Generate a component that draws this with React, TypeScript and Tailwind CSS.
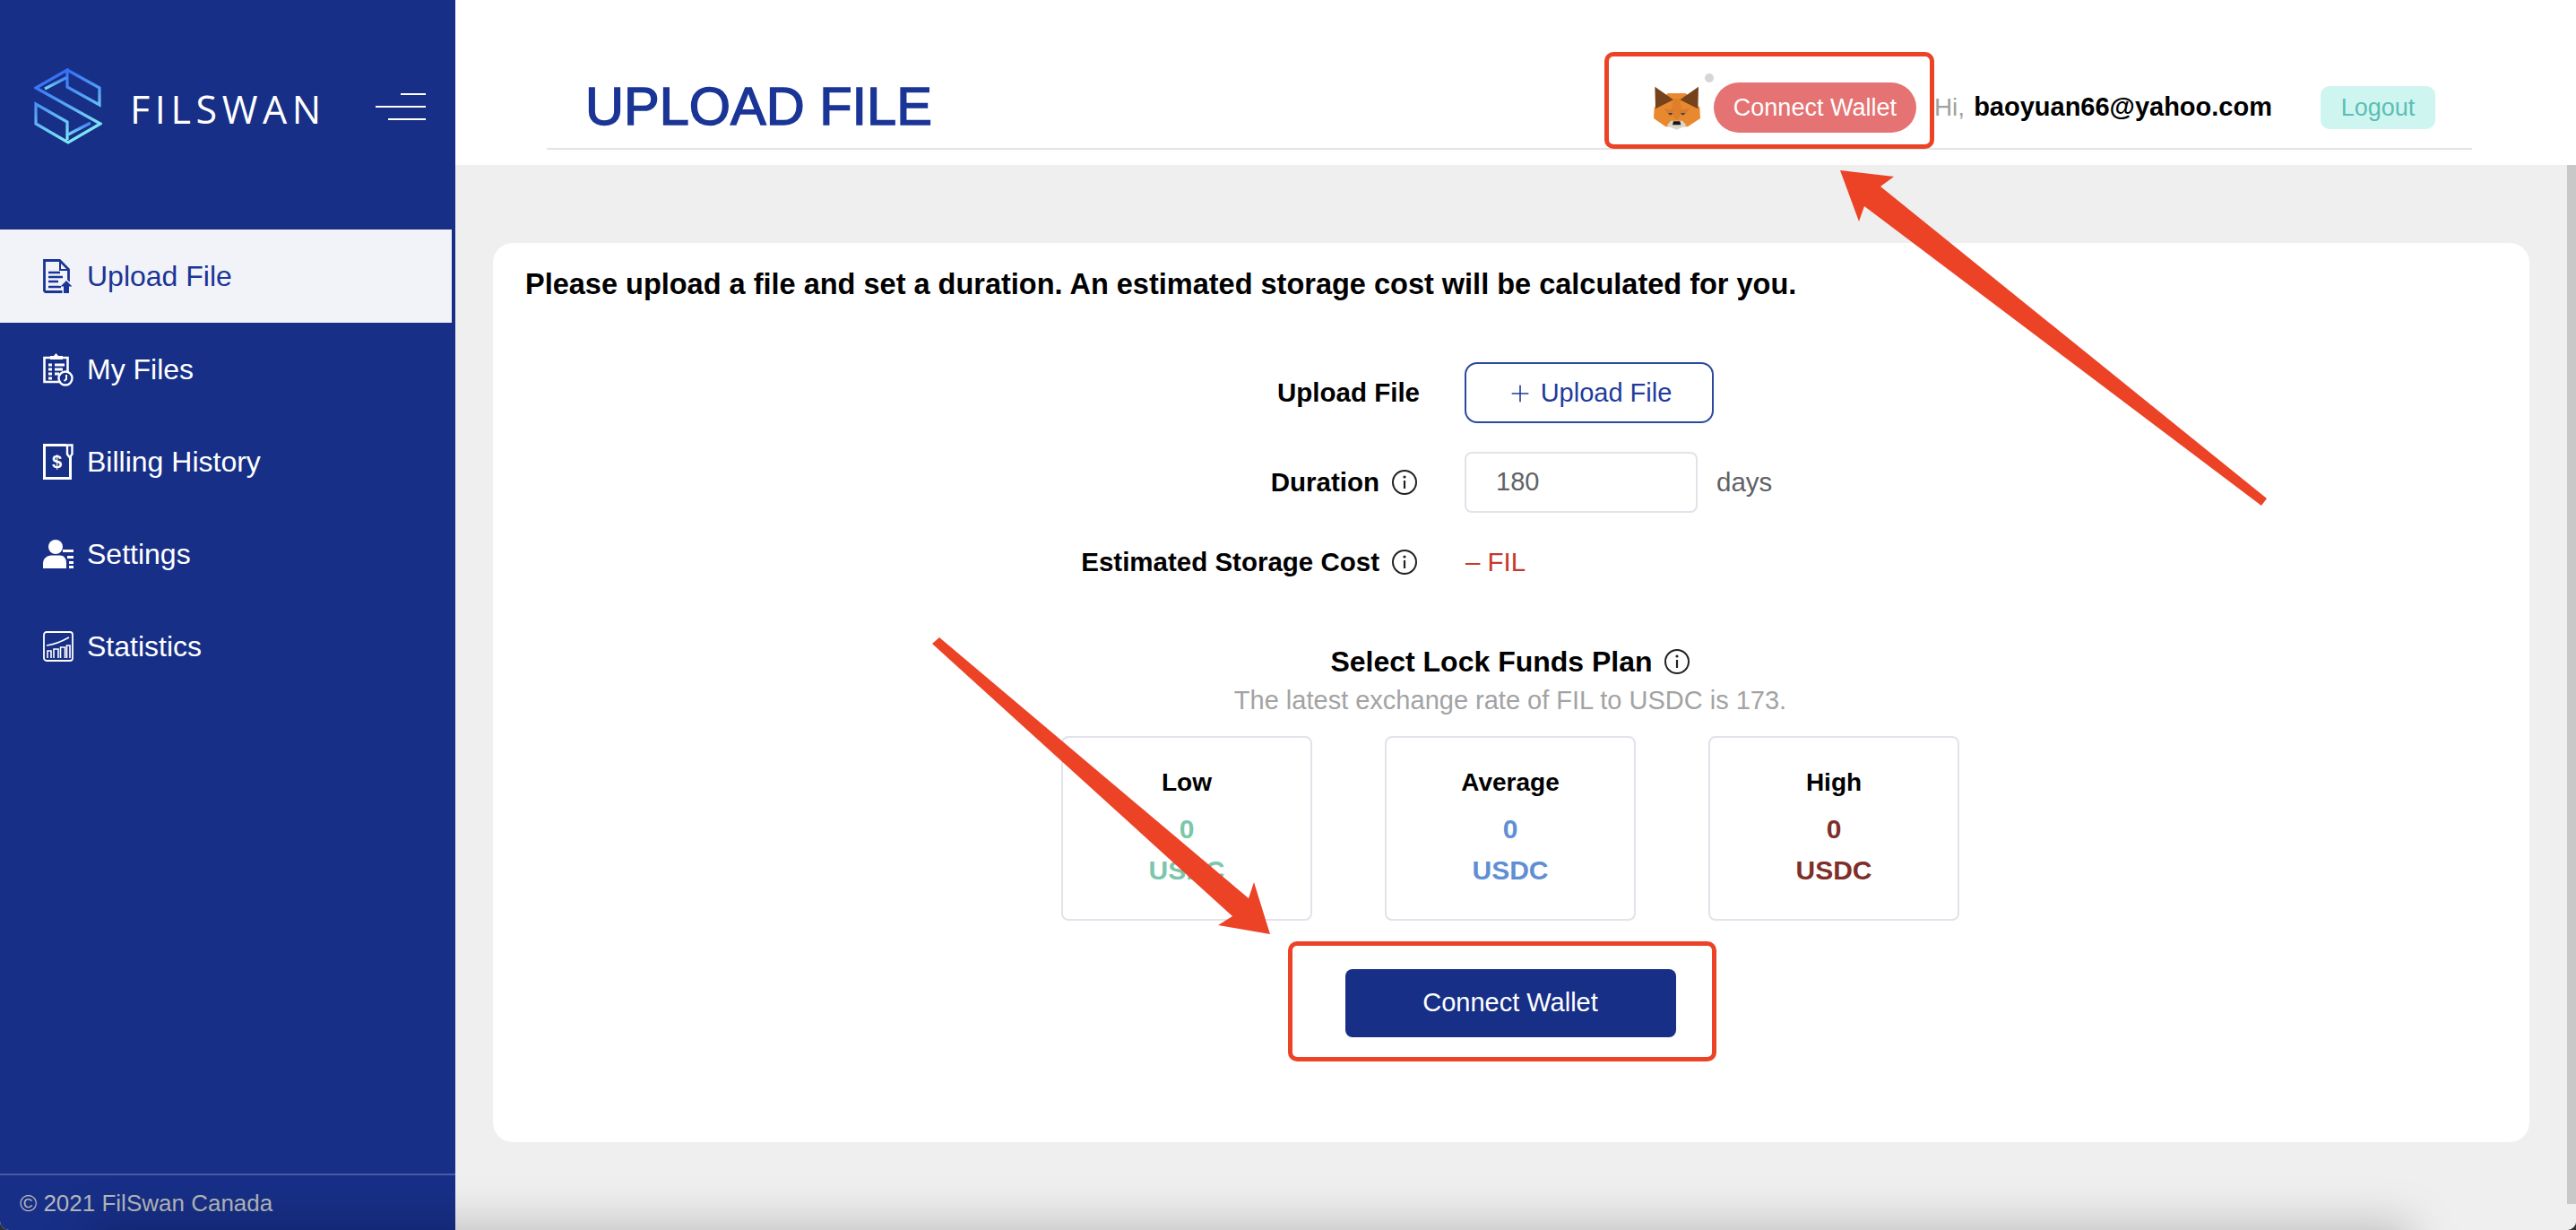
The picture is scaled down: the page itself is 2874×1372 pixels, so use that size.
import React from 'react';
import { Plus } from 'lucide-react';

const InfoIcon = () => (
  <svg width="30" height="30" viewBox="0 0 30 30" fill="none" className="shrink-0">
    <circle cx="15" cy="15" r="13" stroke="#222" strokeWidth="2" />
    <circle cx="15" cy="9" r="1.6" fill="#222" />
    <path d="M15 13v9" stroke="#222" strokeWidth="2.2" />
  </svg>
);

const UploadIcon = () => (
  <svg width="34" height="38" viewBox="0 0 34 38" fill="none">
    <path d="M1.500 36.500V1.500h17l10 10v14M1.500 36.500h20" stroke="currentColor" strokeWidth="2.800" />
    <path d="M19 3v9h9" stroke="currentColor" strokeWidth="2" />
    <path d="M6 15h13M6 20h16M6 25h11M6 31h14" stroke="currentColor" strokeWidth="2.400" />
    <path d="M26 22l8 8h-4v8h-7v-8h-5z" fill="#f2f3f8" />
    <path d="M26 24l6.500 6.500h-3.500V38h-6v-7.500h-3.500z" fill="currentColor" />
  </svg>
);

const FilesIcon = () => (
  <svg width="34" height="38" viewBox="0 0 34 38" fill="none">
    <path d="M18 33H1.500V6h26v16" stroke="currentColor" strokeWidth="2.600" />
    <path d="M8 8V4h4l2.500-3 2.500 3h5v4z" fill="currentColor" />
    <path d="M6 14h4M6 19h4M6 24h4M6 29h4M13 14h11M13 19h9M13 24h5" stroke="currentColor" strokeWidth="3" />
    <circle cx="25" cy="29" r="7.500" fill="#172f87" stroke="currentColor" strokeWidth="2.400" />
    <path d="M26 25v5l-2.500 2" stroke="currentColor" strokeWidth="2" />
  </svg>
);

const BillingIcon = () => (
  <svg width="34" height="40" viewBox="0 0 34 40" fill="none">
    <path d="M26 1.500H1.500v37h29V14" stroke="currentColor" strokeWidth="3" />
    <path d="M27 1.500h5.500v10l-2.700 4-2.800-4z" fill="#172f87" stroke="currentColor" strokeWidth="2.400" />
    <text x="15.500" y="27" textAnchor="middle" fill="currentColor" fontSize="20" fontWeight="700" fontFamily="Liberation Sans, sans-serif">$</text>
  </svg>
);

const SettingsIcon = () => (
  <svg width="34" height="32" viewBox="0 0 34 32" fill="none">
    <circle cx="14" cy="8" r="8" fill="currentColor" />
    <path d="M0 32v-6c0-5 5-8.500 9-8.500h10c4 0 7 3 7 8.500v6z" fill="currentColor" />
    <path d="M22 11h12v3H22zM27 18h7v3h-7zM29 24h5v3h-5zM29 29h5v3h-5z" fill="currentColor" />
  </svg>
);

const StatsIcon = () => (
  <svg width="34" height="34" viewBox="0 0 34 34" fill="none">
    <rect x="1" y="1" width="32" height="32" rx="3" stroke="currentColor" strokeWidth="1.800" />
    <path d="M4 16c8-1 16-4 25-9" stroke="currentColor" strokeWidth="1.600" />
    <path d="M5 30v-8h4v8M12 30V20h5v10M19.500 30V18h5v12M26.500 30V16H30v14" stroke="currentColor" strokeWidth="1.600" />
  </svg>
);

const FilLogo = () => (
  <svg width="76" height="86" viewBox="0 0 76 86" fill="none">
    <defs>
      <linearGradient id="swan" x1="0" y1="0" x2="0.35" y2="1">
        <stop offset="0" stopColor="#2a5cf5" />
        <stop offset="0.5" stopColor="#4f9bf5" />
        <stop offset="1" stopColor="#7fe6f5" />
      </linearGradient>
    </defs>
    <g stroke="url(#swan)" strokeWidth="3.200" strokeLinejoin="miter">
      <path d="M37 2L73 22V41L37 21V2L2 22L74 62L38 83L2 62V40L37 60V80" />
      <path d="M37 10L12 23" />
      <path d="M8 44V64" />
      <path d="M38 74L63 61" />
    </g>
  </svg>
);

const FoxLogo = () => (
  <svg width="52" height="50" viewBox="78 105 156 150" className="shrink-0">
    <path d="M125 132H185L232 180L234 216L192 244H118L78 216L80 180Z" fill="#e8892f" />
    <path d="M82 110L144 154L84 184Z" fill="#75421b" />
    <path d="M228 110L166 154L226 184Z" fill="#75421b" />
    <path d="M146 150H164L176 195L155 222L134 195Z" fill="#e07f2a" />
    <path d="M112 182L146 190L130 208Z" fill="#d47c32" />
    <path d="M198 182L164 190L180 208Z" fill="#d47c32" />
    <path d="M126 198L142 198L135 206Z" fill="#38404a" />
    <path d="M168 198L184 198L175 206Z" fill="#38404a" />
    <path d="M122 240L136 224H174L188 240L155 254Z" fill="#dcd5cb" />
    <path d="M144 226H166L169 238H141Z" fill="#161616" />
  </svg>
);

const nav = [
  { label: 'Upload File', icon: <UploadIcon />, active: true },
  { label: 'My Files', icon: <FilesIcon /> },
  { label: 'Billing History', icon: <BillingIcon /> },
  { label: 'Settings', icon: <SettingsIcon /> },
  { label: 'Statistics', icon: <StatsIcon /> },
];

const plans = [
  { label: 'Low', color: 'text-[#7cc6ac]' },
  { label: 'Average', color: 'text-[#5f8fd2]' },
  { label: 'High', color: 'text-[#7f2f2a]' },
];

const App: React.FC = () => {
  return (
    <div className="h-[1372px] w-[2874px] bg-[#2b3030]">
      <div className="relative flex h-full w-full overflow-hidden rounded-b-[10px] bg-white font-['Liberation_Sans',Arial,sans-serif]">
        {/* Sidebar */}
        <aside className="flex h-full w-[508px] shrink-0 flex-col bg-[#172f87] text-white">
          <div className="flex h-[256px] shrink-0 items-start pl-[38px] pt-[76px]">
            <FilLogo />
            <span className="ml-[31px] mt-[17px] font-['Open_Sans',sans-serif] text-[43px] font-medium leading-[58px] tracking-[5.6px] text-white">
              FILSWAN
            </span>
            <div className="ml-[55px] mt-[28px] flex w-[56px] flex-col items-end gap-[12px]">
              <span className="h-[2px] w-[28px] bg-white" />
              <span className="h-[2px] w-[56px] bg-white" />
              <span className="h-[2px] w-[42px] bg-white" />
            </div>
          </div>
          <nav className="flex flex-col">
            {nav.map((item) => (
              <div
                key={item.label}
                className={`flex items-center gap-[15px] pl-[48px] text-[32px] ${
                  item.active ? 'mr-[4px] h-[104px] bg-[#f2f3f8] text-[#1a3596]' : 'h-[103px] text-white'
                }`}
              >
                <span className="flex w-[34px] shrink-0 justify-center">{item.icon}</span>
                {item.label}
              </div>
            ))}
          </nav>
          <div className="mt-auto flex h-[63px] items-center border-t-2 border-[#4a5ca0] pl-[22px] pt-[2px] text-[26px] text-[#b4b6ba]">
            © 2021 FilSwan Canada
          </div>
        </aside>

        {/* Main column */}
        <div className="flex min-w-0 flex-1 flex-col">
          <header className="h-[184px] shrink-0 bg-white pl-[102px] pr-[116px]">
            <div className="flex h-[167px] items-end border-b-2 border-[#e4e4e4] pb-[17px] pl-[43px]">
              <h1 className="text-[59.500px] font-normal leading-none text-[#1a3596] [-webkit-text-stroke:1.500px_#1a3596]">
                UPLOAD FILE
              </h1>
              <div className="ml-auto flex items-center pr-[41px]">
                <div className="relative mr-[15px]">
                  <FoxLogo />
                  <span className="absolute -right-[15px] -top-[13px] h-[10px] w-[10px] rounded-full bg-[#d6d6d6]" />
                </div>
                <button className="flex h-[56px] w-[226px] items-center justify-center rounded-[28px] bg-[#e57373] text-[27px] text-white">
                  Connect Wallet
                </button>
                <span className="ml-[20px] text-[28px] text-[#a0a0a0]">Hi,</span>
                <span className="ml-[10px] text-[29px] font-bold text-black">baoyuan66@yahoo.com</span>
                <button className="ml-[54px] flex h-[48px] w-[128px] items-center justify-center rounded-[10px] bg-[#cff5f1] text-[27px] text-[#5bbfb5]">
                  Logout
                </button>
              </div>
            </div>
          </header>

          <main className="flex-1 bg-[#efefef] pl-[42px] pr-[52px] pt-[87px]">
            <section className="h-[1003px] rounded-[22px] bg-white pl-[36px] pt-[28px]">
              <p className="text-[32.500px] font-bold leading-[36px] text-black">
                Please upload a file and set a duration. An estimated storage cost will be calculated for you.
              </p>
              <div className="-ml-[36px] mt-[69px] flex flex-col">
                <div className="flex h-[68px] items-center">
                  <div className="w-[1034px] text-right text-[29.500px] font-bold text-black">Upload File</div>
                  <button className="ml-[50px] flex h-[68px] w-[278px] items-center justify-center gap-[8px] rounded-[14px] border-2 border-[#2a4a9f] pt-[2px] text-[29px] text-[#1f3c9c]">
                    <Plus size={30} strokeWidth={1.300} />
                    Upload File
                  </button>
                </div>
                <div className="mt-[32px] flex h-[68px] items-center">
                  <div className="flex w-[1034px] items-center justify-end gap-[13px] pr-[2px] text-[29.500px] font-bold text-black">
                    Duration <InfoIcon />
                  </div>
                  <div className="ml-[50px] flex h-[68px] w-[260px] items-center rounded-[8px] border-2 border-[#e2e3ea] pl-[33px] text-[29px] text-[#606266]">
                    180
                  </div>
                  <span className="ml-[21px] text-[29.500px] text-[#606266]">days</span>
                </div>
                <div className="mt-[21px] flex h-[68px] items-center">
                  <div className="flex w-[1034px] items-center justify-end gap-[13px] pr-[2px] text-[29.500px] font-bold text-black">
                    Estimated Storage Cost <InfoIcon />
                  </div>
                  <span className="ml-[51px] text-[29.500px] text-[#c5392c]">– FIL</span>
                </div>
              </div>
              <div className="-ml-[36px] mt-[59px] flex flex-col items-center pr-[2px]">
                <div className="flex items-center gap-[12px] text-[32px] font-bold leading-[36px] text-black">
                  Select Lock Funds Plan <InfoIcon />
                </div>
                <p className="mt-[7px] text-[29px] leading-[36px] text-[#a3a3a3]">
                  The latest exchange rate of FIL to USDC is 173.
                </p>
                <div className="mt-[22px] flex gap-[81px]">
                  {plans.map((plan) => (
                    <div
                      key={plan.label}
                      className="flex h-[206px] w-[280px] flex-col items-center rounded-[8px] border-2 border-[#e2e3ea] pt-[32px] text-[30px] font-bold"
                    >
                      <span className="text-[28px] leading-[36px] text-black">{plan.label}</span>
                      <span className={`mt-[16px] leading-[36px] ${plan.color}`}>0</span>
                      <span className={`mt-[10px] leading-[36px] ${plan.color}`}>USDC</span>
                    </div>
                  ))}
                </div>
                <button className="mt-[54px] flex h-[76px] w-[369px] items-center justify-center rounded-[8px] bg-[#172f87] text-[29px] font-normal text-white">
                  Connect Wallet
                </button>
              </div>
            </section>
          </main>
        </div>

        {/* scrollbar edge */}
        <div className="absolute right-0 top-[184px] h-[1159px] w-[10px] bg-[#c8c8c8]" />

        {/* soft shadow along the bottom of the window */}
        <div className="pointer-events-none absolute left-[100px] top-[1365px] h-[80px] w-[2590px] bg-black/20 blur-[25px]" />

        {/* red annotations drawn over the page */}
        <div className="pointer-events-none absolute left-[1790px] top-[58px] h-[108px] w-[368px] rounded-[10px] border-[5px] border-[#ec4327]" />
        <div className="pointer-events-none absolute left-[1437px] top-[1050px] h-[134px] w-[478px] rounded-[10px] border-[5px] border-[#ec4327]" />
        <svg className="pointer-events-none absolute inset-0" width="2874" height="1372" viewBox="0 0 2874 1372">
          <polygon points="2053,190 2113,197 2098,208 2529,556 2523,564 2080,230 2074,247" fill="#ec4327" />
          <polygon points="1040,718 1048,711 1393,1002 1399,984 1417,1042 1359,1032 1375,1022" fill="#ec4327" />
        </svg>
      </div>
    </div>
  );
};

export default App;
